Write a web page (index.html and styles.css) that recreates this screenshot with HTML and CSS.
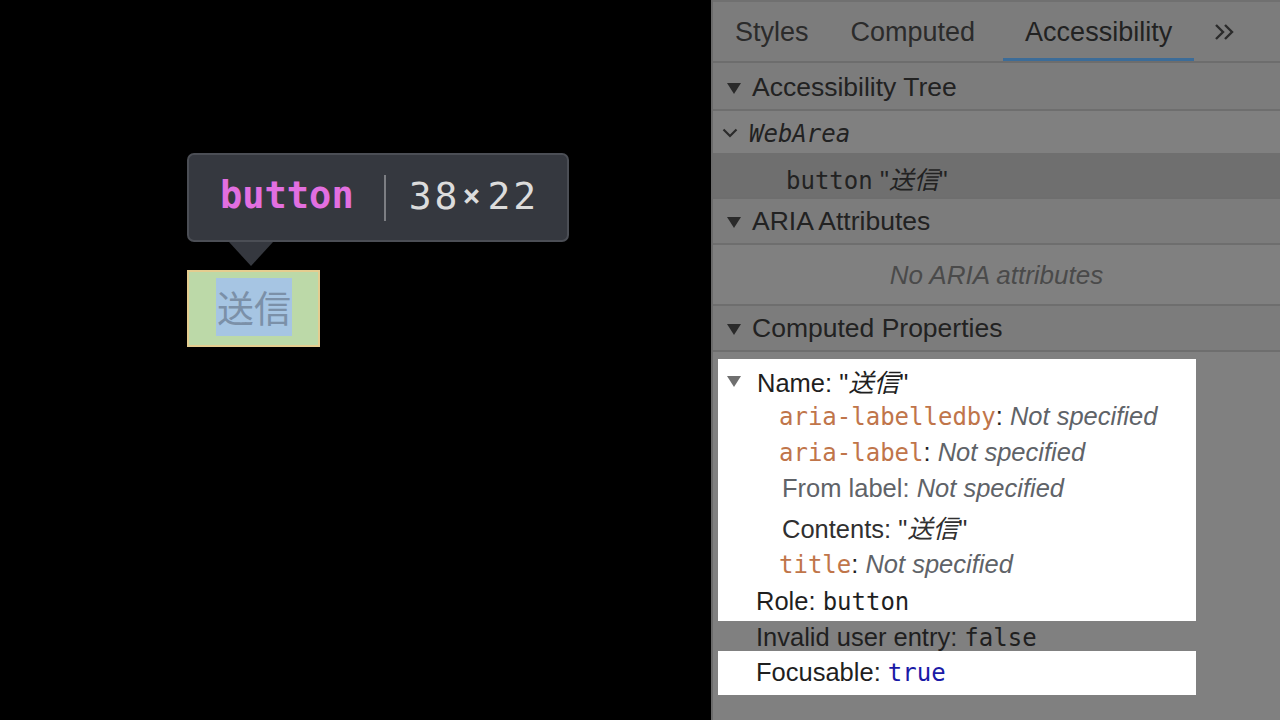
FILE: index.html
```html
<!DOCTYPE html>
<html lang="ja">
<head>
<meta charset="utf-8">
<title>Accessibility</title>
<link rel="stylesheet" href="styles.css">
</head>
<body>
<div class="stage">
  <div class="inspect">
    <div class="tooltip">
      <span class="tt-tag">button</span>
      <span class="tt-sep"></span>
      <span class="tt-size">38<span class="tt-x">×</span>22</span>
    </div>
    <div class="tt-arrow"></div>
    <div class="hl">
      <div class="hl-content">送信</div>
    </div>
  </div>
</div>
<div class="panel">
  <div class="tabbar">
    <div class="tab">Styles</div>
    <div class="tab computed">Computed</div>
    <div class="tab active">Accessibility</div>
    <div class="tab more">
      <svg width="22" height="18" viewBox="0 0 22 18"><path d="M2 2 L9 9 L2 16 M11 2 L18 9 L11 16" fill="none" stroke="#2b2b2b" stroke-width="2.4"/></svg>
    </div>
  </div>

  <div class="sec-head"><span class="tri"></span><span>Accessibility Tree</span></div>
  <div class="tree-row webarea">
    <svg class="chev" width="16" height="10" viewBox="0 0 16 10"><path d="M1.5 1.5 L8 8 L14.5 1.5" fill="none" stroke="#2b2b2b" stroke-width="2.2"/></svg>
    <span class="mono ital">WebArea</span>
  </div>
  <div class="tree-row selected">
    <span class="line"><span class="mono">button</span> <span class="q">"<i>送信</i>"</span></span>
  </div>

  <div class="sec-head"><span class="tri"></span><span>ARIA Attributes</span></div>
  <div class="empty">No ARIA attributes</div>

  <div class="sec-head"><span class="tri"></span><span>Computed Properties</span></div>

  <div class="props">
    <div class="box box-main">
      <div class="prop r1"><span class="tri grey"></span><span class="line">Name: "<i>送信</i>"</span></div>
      <div class="prop sub r2"><span class="line"><span class="attr">aria-labelledby</span>: <i class="ns">Not specified</i></span></div>
      <div class="prop sub r3"><span class="line"><span class="attr">aria-label</span>: <i class="ns">Not specified</i></span></div>
      <div class="prop sub2 r4"><span class="line"><span class="from">From label:</span> <i class="ns">Not specified</i></span></div>
      <div class="prop sub2 r5"><span class="line contents">Contents: "<i>送信</i>"</span></div>
      <div class="prop sub r6"><span class="line"><span class="attr">title</span>: <i class="ns">Not specified</i></span></div>
      <div class="prop top r7"><span class="line">Role: <span class="mono">button</span></span></div>
    </div>
    <div class="prop top invalid"><span class="line">Invalid user entry: <span class="mono">false</span></span></div>
    <div class="box box-focus">
      <div class="prop top r9"><span class="line">Focusable: <span class="mono blue">true</span></span></div>
    </div>
  </div>
</div>
</body>
</html>
```

FILE: styles.css
```css
html, body {
  margin: 0;
  padding: 0;
  width: 1280px;
  height: 720px;
  overflow: hidden;
  background: #000;
}
body {
  display: flex;
  font-family: "Liberation Sans", Arial, "Noto Sans CJK JP", sans-serif;
}
.stage {
  width: 711px;
  height: 720px;
  background: #000;
  padding: 153px 0 0 187px;
  box-sizing: border-box;
}
.inspect {
  display: flex;
  flex-direction: column;
  align-items: flex-start;
}
.tooltip {
  width: 382px;
  height: 89px;
  box-sizing: border-box;
  background: #35383f;
  border: 2px solid #4b4e55;
  border-radius: 7px;
  display: flex;
  align-items: center;
  padding: 0 0 4px 31px;
}
.tt-tag {
  font-family: "DejaVu Sans Mono", monospace;
  font-weight: bold;
  font-size: 37px;
  color: #e26fe0;
}
.tt-sep {
  width: 2px;
  height: 46px;
  background: #7c7e83;
  margin: 4px 23px 0 30px;
}
.tt-size {
  font-family: "DejaVu Sans Mono", monospace;
  font-size: 38px;
  color: #dcdcdc;
  display: flex;
  align-items: center;
  letter-spacing: 3px;
}
.tt-x {
  font-size: 30px;
  font-weight: bold;
  margin: 0 4px 0 2px;
}
.tt-arrow {
  width: 0;
  height: 0;
  margin-left: 42px;
  border-left: 22px solid transparent;
  border-right: 22px solid transparent;
  border-top: 24px solid #35383f;
}
.hl {
  margin-top: 4px;
  width: 133px;
  height: 77px;
  box-sizing: border-box;
  border: 2px solid #e4cd90;
  background: #bcd9a8;
  padding: 6px 0 0 27px;
}
.hl-content {
  width: 76px;
  height: 58px;
  background: #a6c5e3;
  color: #7b90a8;
  font-family: "Noto Sans CJK JP", sans-serif;
  font-size: 37px;
  line-height: 58px;
  text-align: center;
}

/* DevTools panel (dimmed) */
.panel {
  flex: 1;
  height: 720px;
  background: #808080;
  border-left: 2px solid #6b6b6b;
  color: #222;
  font-size: 26px;
}
.tabbar {
  height: 59px;
  border-top: 2px solid #707070;
  border-bottom: 2px solid #6d6d6d;
  background: #7c7c7c;
  display: flex;
  align-items: stretch;
  padding-left: 1px;
}
.tab {
  padding: 4px 21px 0;
  font-size: 27px;
  color: #2b2b2b;
  display: flex;
  align-items: center;
  box-sizing: border-box;
  border-bottom: 3px solid transparent;
}
.tab.computed {
  padding-right: 28px;
}
.tab.active {
  border-bottom-color: #3c6c98;
  color: #222;
  padding: 4px 22px 0 22px;
}
.tab.more {
  padding: 4px 0 0 20px;
}
.sec-head {
  height: 48px;
  border-bottom: 2px solid #6e6e6e;
  background: #7c7c7c;
  display: flex;
  align-items: center;
  padding-left: 14px;
  padding-top: 2px;
  box-sizing: border-box;
  color: #222;
  font-size: 26.5px;
}
.tree-row + .sec-head,
.empty + .sec-head {
  border-top: 2px solid #6e6e6e;
  height: 48px;
  padding-top: 0;
}
.tri {
  width: 0;
  height: 0;
  border-left: 7px solid transparent;
  border-right: 7px solid transparent;
  border-top: 11px solid #2a2a2a;
  margin-right: 11px;
  margin-top: 3px;
}
.tri.grey {
  border-top-color: #6f6f6f;
  margin-right: 16px;
}
.tree-row {
  height: 42px;
  display: flex;
  align-items: center;
  box-sizing: border-box;
  padding-top: 4px;
}
.webarea {
  padding-left: 9px;
}
.chev {
  margin-right: 11px;
  margin-top: -2px;
}
.mono {
  font-family: "DejaVu Sans Mono", "Liberation Mono", monospace;
  font-size: 24px;
}
.ital {
  font-style: italic;
}
.selected {
  height: 44px;
  background: #6f6f6f;
  padding-left: 73px;
  padding-top: 6px;
}
.line {
  white-space: pre;
}
.q {
  font-size: 25px;
}
.q i, .prop i {
  font-family: "Liberation Sans", "Noto Sans CJK JP", sans-serif;
}
.empty {
  height: 59px;
  display: flex;
  align-items: center;
  justify-content: center;
  font-style: italic;
  color: #4a4a4a;
  font-size: 26px;
  padding-top: 2px;
  box-sizing: border-box;
}
.props {
  padding-top: 7px;
}
.box {
  margin-left: 5px;
  width: 478px;
  background: #fff;
}
.box-main {
  padding: 2px 0 3px;
}
.prop {
  display: flex;
  align-items: center;
  font-size: 25.5px;
  color: #1f1f1f;
  height: 36px;
  box-sizing: border-box;
  padding-top: 2px;
}
.r1 { padding-left: 9px; }
.sub { padding-left: 61px; }
.sub2 { padding-left: 64px; }
.r4 { height: 37px; }
.r5 { height: 38px; }
.r6 { height: 37px; padding-top: 4px; }
.r7 { height: 37px; padding-top: 3px; }
.top { padding-left: 38px; }
.invalid {
  height: 30px;
  padding-left: 43px;
}
.box-focus {
  height: 44px;
}
.r9 {
  height: 40px;
}
.attr {
  font-family: "DejaVu Sans Mono", "Liberation Mono", monospace;
  font-size: 24px;
  color: #c0754a;
}
.ns {
  color: #5f6368;
}
.from {
  color: #5f6368;
}
.contents {
  color: #303030;
}
.blue {
  color: #1a1aa6;
}
```
